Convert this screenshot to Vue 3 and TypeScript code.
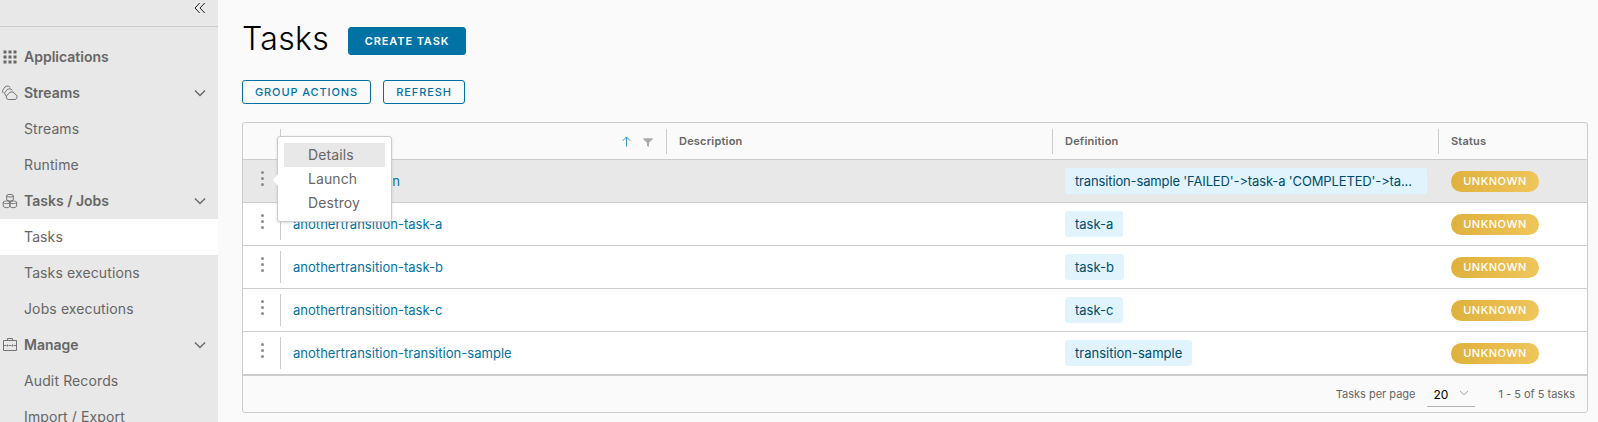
<script setup lang="ts">
interface NavItem {
  label: string
  icon?: 'grid' | 'clouds' | 'jobs' | 'case'
  expandable?: boolean
  active?: boolean
}
interface Task {
  name: string
  definition: string
  selected?: boolean
}
const nav: NavItem[] = [
  { label: 'Applications', icon: 'grid' },
  { label: 'Streams', icon: 'clouds', expandable: true },
  { label: 'Streams' },
  { label: 'Runtime' },
  { label: 'Tasks / Jobs', icon: 'jobs', expandable: true },
  { label: 'Tasks', active: true },
  { label: 'Tasks executions' },
  { label: 'Jobs executions' },
  { label: 'Manage', icon: 'case', expandable: true },
  { label: 'Audit Records' },
  { label: 'Import / Export' },
]
const tasks: Task[] = [
  {
    name: 'anothertransition',
    definition: "transition-sample 'FAILED'->task-a 'COMPLETED'->ta...",
    selected: true,
  },
  { name: 'anothertransition-task-a', definition: 'task-a' },
  { name: 'anothertransition-task-b', definition: 'task-b' },
  { name: 'anothertransition-task-c', definition: 'task-c' },
  { name: 'anothertransition-transition-sample', definition: 'transition-sample' },
]
const actions: string[] = ['Details', 'Launch', 'Destroy']
</script>

<template>
  <div class="layout">
    <aside class="sidebar">
      <div class="collapse">
        <svg width="12" height="12" viewBox="0 0 12 12"><path d="M5.700 1 1 6l4.700 5M10.700 1 6 6l4.700 5" /></svg>
      </div>
      <nav>
        <div v-for="(item, i) in nav" :key="i" class="item" :class="{ group: item.icon, active: item.active }">
          <span class="icon">
            <svg v-if="item.icon === 'grid'" class="grid-icon" width="16" height="16" viewBox="0 0 16 16">
              <path d="M1.500 1.500h3v3h-3zM6.500 1.500h3v3h-3zM11.500 1.500h3v3h-3zM1.500 6.500h3v3h-3zM6.500 6.500h3v3h-3zM11.500 6.500h3v3h-3zM1.500 11.500h3v3h-3zM6.500 11.500h3v3h-3zM11.500 11.500h3v3h-3z" />
            </svg>
            <svg v-else-if="item.icon === 'clouds'" width="16" height="16" viewBox="0 0 16 16">
              <path d="M6.500 14.500a2.600 2.600 0 0 1-.3-5.100 3.700 3.700 0 0 1 7-.1 2.700 2.700 0 0 1-.1 5.200zM4.300 10.900a2.700 2.700 0 0 1-.4-4.700 3.700 3.700 0 0 1 6.500-.8M1.500 8.100A2.700 2.700 0 0 1 1.900 3.700 3.700 3.700 0 0 1 8.200 2.300" />
            </svg>
            <svg v-else-if="item.icon === 'jobs'" width="16" height="16" viewBox="0 0 16 16">
              <path d="M4.700 2.700v4c1 1.800 5.600 1.800 6.600 0v-4M4.700 2.700c0-1.700 6.600-1.700 6.600 0s-6.600 1.700-6.600 0M1.200 9.300v4c1 1.900 5.700 1.900 6.700 0v-4M1.200 9.300c0-1.700 6.700-1.700 6.700 0s-6.700 1.700-6.700 0M7.900 9.300v4c1 1.900 5.700 1.900 6.700 0v-4M7.900 9.300c0-1.700 6.700-1.700 6.700 0s-6.700 1.700-6.700 0" />
            </svg>
            <svg v-else-if="item.icon === 'case'" width="16" height="16" viewBox="0 0 16 16">
              <path d="M1.500 3.500h13v10h-13zM5.500 3.500v-2h5v2M1.500 8.500h3M6.500 8.500h3M11.500 8.500h3M5.500 7.500v2M10.500 7.500v2" />
            </svg>
          </span>
          <span class="label">{{ item.label }}</span>
          <svg v-if="item.expandable" class="chevron" width="12" height="8" viewBox="0 0 12 8"><path d="m1 1.500 5 5 5-5" /></svg>
        </div>
      </nav>
    </aside>

    <main>
      <header class="title">
        <h1>Tasks</h1>
        <button class="btn primary">CREATE TASK</button>
      </header>
      <div class="toolbar">
        <button class="btn group-btn">GROUP ACTIONS</button>
        <button class="btn refresh-btn">REFRESH</button>
      </div>

      <section class="datagrid">
        <div class="row head">
          <div class="cell handle"></div>
          <div class="cell sep name">
            <svg class="sort" width="9" height="11" viewBox="0 0 9 11"><path d="M4.500 10.500V1M.7 4.800l3.800-3.900 3.800 3.900" /></svg>
            <svg class="filter" width="10" height="9" viewBox="0 0 10 9"><path d="M.3.300h9.400v1L6 4.800V8.800L4 8V4.800L.3 1.300z" /></svg>
          </div>
          <div class="cell sep desc">Description</div>
          <div class="cell sep def">Definition</div>
          <div class="cell sep status">Status</div>
        </div>
        <div v-for="task in tasks" :key="task.name" class="row" :class="{ selected: task.selected }">
          <div class="cell handle">
            <span class="dots"><i></i><i></i><i></i></span>
            <div v-if="task.selected" class="menu">
              <div v-for="(action, i) in actions" :key="action" class="action" :class="{ hover: i === 0 }">{{ action }}</div>
            </div>
          </div>
          <div class="cell sep name"><a>{{ task.name }}</a></div>
          <div class="cell desc"></div>
          <div class="cell def"><span class="chip" :class="{ wide: task.selected }">{{ task.definition }}</span></div>
          <div class="cell status"><span class="badge">UNKNOWN</span></div>
        </div>
        <footer>
          <span class="per-page">Tasks per page</span>
          <span class="select">
            <span>20</span>
            <svg width="10" height="6" viewBox="0 0 10 6"><path d="m1 .8 4 4 4-4" /></svg>
          </span>
          <span class="range">1 - 5 of 5 tasks</span>
        </footer>
      </section>
    </main>
  </div>
</template>

<style>
body {
  margin: 0;
  overflow: hidden;
}
</style>

<style scoped>
.layout {
  display: flex;
  width: 1598px;
  height: 422px;
  overflow: hidden;
  background: #fafafa;
  color: #666;
  font-family: Inter, "Open Sans", sans-serif;
  font-variant-ligatures: none;
  font-feature-settings: "calt" 0;
}
svg {
  display: block;
  fill: none;
  stroke: currentColor;
}
.sidebar {
  width: 218px;
  flex: none;
  background: #e8e8e8;
}
.collapse {
  box-sizing: border-box;
  height: 27px;
  padding: 2px 12px 0 0;
  display: flex;
  justify-content: flex-end;
  border-bottom: 1px solid #ccc;
  color: #222;
}
nav {
  padding-top: 12px;
}
.item {
  box-sizing: border-box;
  height: 36px;
  display: flex;
  align-items: center;
  padding: 0 12px 0 2px;
  font-size: 14px;
}
.item.active {
  background: #fff;
}
.icon {
  width: 22px;
}
.icon svg {
  stroke-width: 0.9;
}
.icon .grid-icon {
  fill: currentColor;
  stroke: none;
}
.label {
  flex: 1;
  padding-bottom: 2px;
  letter-spacing: 0.12px;
}
.group .label {
  font-weight: 600;
  letter-spacing: 0;
}
.chevron {
  stroke-width: 1.4;
}
main {
  width: 1346px;
  padding: 22px 0 0 24px;
}
.title {
  display: flex;
  height: 40px;
}
h1 {
  margin: 0;
  width: 106px;
  font-size: 32px;
  line-height: 33px;
  font-weight: 300;
  letter-spacing: 0.3px;
  color: #000;
}
.btn {
  box-sizing: border-box;
  height: 24px;
  padding: 0;
  border: 1px solid #0072a3;
  border-radius: 3px;
  background: transparent;
  color: #0072a3;
  font: 500 11px/22px Inter, sans-serif;
  letter-spacing: 0.9px;
  text-align: center;
}
.primary {
  width: 118px;
  height: 28px;
  margin-top: 5px;
  background: #0072a3;
  color: #fff;
  font-weight: 600;
}
.toolbar {
  display: flex;
  gap: 12px;
  padding-top: 18px;
}
.group-btn {
  width: 129px;
}
.refresh-btn {
  width: 82px;
}
.datagrid {
  box-sizing: border-box;
  width: 1346px;
  height: 291px;
  margin-top: 18px;
  border: 1px solid #ccc;
  border-radius: 3px;
  background: #fafafa;
}
.row {
  box-sizing: border-box;
  height: 43px;
  display: flex;
  align-items: center;
  border-bottom: 1px solid #ccc;
  background: #fff;
  font-size: 13px;
}
.row.selected {
  background: #e8e8e8;
}
.head {
  height: 37px;
  background: transparent;
  border-radius: 3px 3px 0 0;
  font-size: 11px;
  font-weight: 600;
  letter-spacing: 0.2px;
}
.cell {
  box-sizing: border-box;
  height: 32px;
  display: flex;
  align-items: center;
  padding-left: 13px;
  width: 386px;
  flex: none;
}
.head .cell {
  height: 25px;
}
.sep {
  border-left: 1px solid #ccc;
  padding-left: 12px;
}
.handle {
  position: relative;
  width: 37px;
  padding-left: 18px;
}
.status {
  width: 148px;
}
.dots {
  display: flex;
  flex-direction: column;
  gap: 3px;
  margin-top: -5px;
}
.dots i {
  width: 3px;
  height: 3px;
  border-radius: 50%;
  background: #8c8c8c;
}
.head .name {
  justify-content: flex-end;
  gap: 12px;
  padding-right: 13px;
}
.sort {
  color: #3197c9;
}
.filter {
  margin-top: 3px;
  fill: #aaa;
  stroke: none;
}
a {
  padding-bottom: 1px;
  letter-spacing: 0.03px;
  color: #0072a3;
}
.selected a {
  letter-spacing: 0.15px;
}
.chip {
  box-sizing: border-box;
  height: 26px;
  padding: 0 10px;
  border-radius: 3px;
  background: #e1f4fd;
  color: #004b6b;
  line-height: 26px;
  white-space: nowrap;
}
.chip.wide {
  width: 362px;
  letter-spacing: -0.14px;
}
.badge {
  width: 88px;
  height: 21px;
  margin-top: 1px;
  border-radius: 11px;
  background: linear-gradient(100deg, #dfb03c, #f0c65c);
  color: #fff;
  font-size: 11px;
  font-weight: 500;
  line-height: 21px;
  letter-spacing: 0.5px;
  text-align: center;
}
.menu {
  position: absolute;
  z-index: 2;
  left: 34px;
  top: -29px;
  box-sizing: border-box;
  width: 115px;
  height: 86px;
  padding: 6px;
  border: 1px solid #ccc;
  border-radius: 3px;
  background: #fff;
  box-shadow: 0 1px 3px rgba(115, 115, 115, 0.25);
}
.menu::before {
  content: "";
  position: absolute;
  left: -5px;
  top: 37px;
  border: solid transparent;
  border-width: 6px 5px 6px 0;
  border-right-color: #fff;
}
.action {
  height: 24px;
  padding-left: 24px;
  font-size: 14px;
  line-height: 24px;
  letter-spacing: 0.1px;
}
.action.hover {
  background: #e8e8e8;
}
footer {
  height: 36px;
  display: flex;
  align-items: center;
  border-top: 1px solid #ccc;
  justify-content: flex-end;
  padding-right: 12px;
  font-size: 11px;
}
.select {
  box-sizing: border-box;
  display: flex;
  align-items: center;
  justify-content: space-between;
  width: 48px;
  height: 24px;
  margin: 2px 23px 0 12px;
  padding: 0 6px 0 6px;
  border-bottom: 1px solid #b3b3b3;
  color: #000;
  font-size: 12px;
}
.select svg {
  margin-top: -4px;
  color: #999;
}
</style>
